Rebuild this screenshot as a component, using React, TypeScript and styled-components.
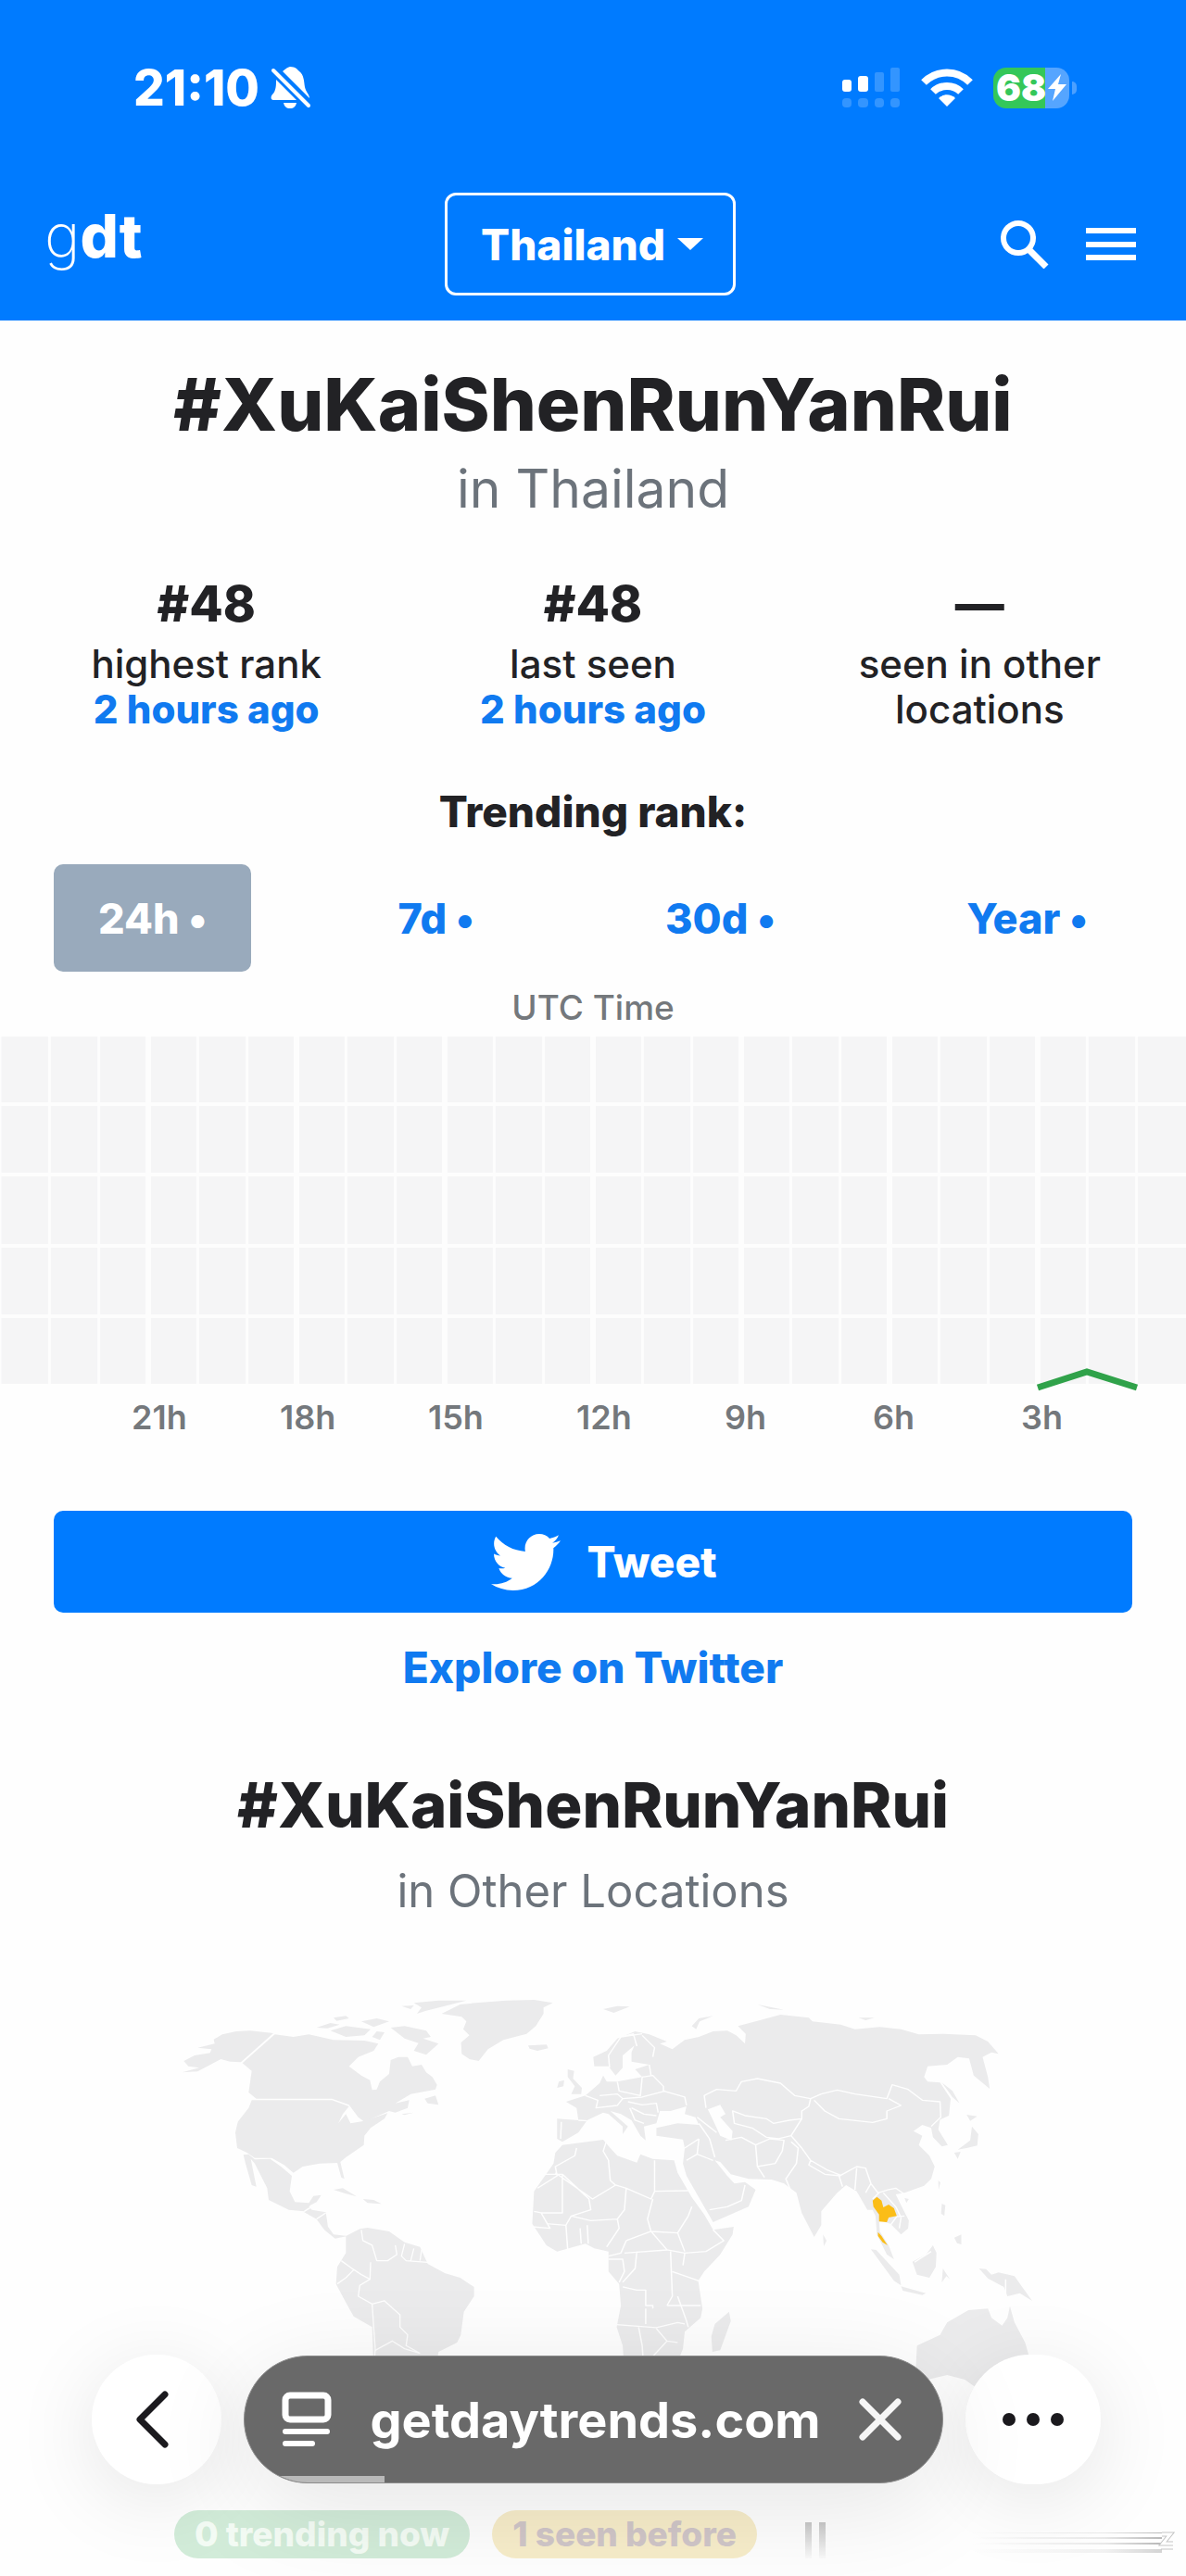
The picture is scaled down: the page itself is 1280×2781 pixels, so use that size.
import styled, { createGlobalStyle } from 'styled-components'
import { FaTwitter } from 'react-icons/fa'

const tabs = ['24h', '7d', '30d', 'Year']
const hours = ['21h', '18h', '15h', '12h', '9h', '6h', '3h']
const stats = [
  { value: '#48', label: 'highest rank', time: '2 hours ago' },
  { value: '#48', label: 'last seen', time: '2 hours ago' },
  { value: '—', label: 'seen in other locations' },
]

const BellOff = () => (
  <svg width="44" height="46" viewBox="0 0 44 46" fill="#fff">
    <path d="M13 5 C16 3 17 1 21 0 C27 0 29 3 31 5 C36 9 36 15 37 22 C38 27 42 30 42 34 Z" />
    <path d="M6 14 L28 36 H3 C0 36 0 32 2 30 C6 26 6 20 6 14 Z" />
    <path d="M14 39 H28 C27 43 25 45 21 45 C17 45 15 43 14 39 Z" />
    <path d="M2 3 L42 43" stroke="#007bff" strokeWidth="8" />
    <path d="M3 4 L41 42" stroke="#fff" strokeWidth="4" strokeLinecap="round" />
  </svg>
)

const Signal = () => (
  <svg width="64" height="44" viewBox="0 0 64 44" fill="#fff">
    <rect x="1" y="13" width="10" height="13" rx="3" />
    <rect x="18" y="9" width="11" height="17" rx="3" />
    <g fillOpacity="0.2">
      <rect x="36" y="5" width="10" height="21" rx="2" />
      <rect x="53" y="0" width="10" height="26" rx="2" />
      <rect x="1" y="33" width="10" height="10" rx="4" />
      <rect x="18" y="33" width="11" height="10" rx="4" />
      <rect x="36" y="33" width="10" height="10" rx="4" />
      <rect x="53" y="33" width="10" height="10" rx="4" />
    </g>
  </svg>
)

const Wifi = () => (
  <svg width="56" height="42" viewBox="0 0 56 42" fill="none" stroke="#fff" strokeWidth="8">
    <path d="M3 15 C17 1 39 1 53 15" />
    <path d="M13 25 C21 17 35 17 43 25" />
    <path d="M28 41 L19 32 C24 27 32 27 37 32 Z" fill="#fff" stroke="none" />
  </svg>
)

const Bolt = () => (
  <svg width="20" height="29" viewBox="0 0 20 29" fill="#fff">
    <path d="M14 0 L0 16 H8 L5 29 L20 11 H11 Z" />
  </svg>
)

const Search = () => (
  <svg width="52" height="52" viewBox="0 0 52 52" fill="none" stroke="#fff">
    <circle cx="19" cy="19" r="16" strokeWidth="6" />
    <path d="M31 32 L49 50" strokeWidth="7" />
  </svg>
)

const Burger = () => (
  <svg width="54" height="36" viewBox="0 0 54 36" fill="#fff">
    <path d="M0 0h54v6H0zM0 15h54v6H0zM0 29h54v6H0z" />
  </svg>
)

const Reader = () => (
  <svg width="54" height="60" viewBox="0 0 54 60" fill="none" stroke="#fff" strokeLinecap="round">
    <rect x="4" y="4" width="46" height="26" rx="5" strokeWidth="7" />
    <path d="M4 43 H49 M4 56 H33" strokeWidth="6" />
  </svg>
)

const Chart = () => (
  <ChartSvg viewBox="0 0 1280 440" role="img" aria-label="Trending rank, last 24 hours">
    <rect width="1280" height="375" fill="#f5f5f6" />
    {Array.from({ length: 24 }, (_, i) => (
      <path
        key={i}
        d={`M${(i * 160) / 3} 0 V375`}
        stroke="#fdfdfd"
        strokeWidth={i > 0 && i % 3 === 0 ? 6 : 3}
      />
    ))}
    <path d="M0 73H1280M0 149H1280M0 226H1280M0 302H1280" stroke="#fdfdfd" strokeWidth="4" />
    <path d="M1120 379 L1173 362 L1227 379" stroke="#30a24a" strokeWidth="7" fill="none" />
    {hours.map((hour, i) => (
      <text key={hour} x={142 + i * 160} y="424">
        {hour}
      </text>
    ))}
  </ChartSvg>
)

const WorldMap = () => (
  <MapSvg viewBox="0 0 1280 560" role="img" aria-label="World map with Thailand highlighted">
    {/* Americas and Greenland */}
    <g transform="translate(160 0) scale(0.3333)">
      <path d="M405 228L330 220L285 222L240 232L212 248L215 262L160 275L205 280L200 292L150 300L115 318L130 335L165 340L110 355L160 352L235 312L265 320L300 322Z" />
      <path d="M410 232L470 240L520 232L600 250L700 252L745 262L730 285L680 305L650 335L690 365L718 380L725 412L740 410L750 385L780 360L785 315L810 305L840 305L855 335L885 330L900 355L920 370L935 395L930 410L850 425L800 455L845 445L840 470L800 485L780 480L700 515L680 500L650 460L595 440L350 440L325 420L335 350L305 325Z" />
      <path d="M335 445L595 445L650 465L630 490L615 520L640 490L655 520L700 512L775 487L765 505L720 535L700 560L698 590L640 630L622 645L635 700L625 695L612 648L555 650L500 660L470 680L440 655L400 632L345 632L320 615L288 600L282 550L290 515L325 470Z" />
      <path d="M308 622L325 620L345 637L395 635L430 660L465 690L458 740L475 775L520 778L535 755L560 752L545 775L525 785L505 805L455 800L390 768L385 730L345 650L332 635L350 725L335 720L315 650Z" />
      <path d="M505 808L520 790L530 800L575 808L582 855L600 880L645 885L605 893L570 865L545 830Z" />
      <path d="M600 735L630 730L675 757L640 748ZM695 765L730 768L755 781L710 778ZM895 440L930 430L940 460L905 455ZM820 490L860 485L830 493Z" />
      <path d="M545 210L590 195L620 200L580 212ZM590 220L640 205L720 215L700 235L640 240ZM600 178L640 172L650 180L610 188ZM690 190L740 180L780 190L730 208ZM785 210L830 205L900 220L915 240L890 245L940 262L900 298L860 285L875 260L830 245ZM740 222L765 225L750 250L725 240ZM820 140L860 138L850 150ZM860 130L940 122L1030 122L960 140L900 155L870 165L885 145Z" />
      <path d="M950 165L1010 135L1080 128L1160 122L1250 120L1310 130L1280 145L1280 165L1255 205L1225 230L1150 250L1100 280L1070 318L1040 312L1015 295L1013 258L1040 235L1020 215L1030 190L1015 175Z" />
      <path d="M1230 268L1290 265L1295 277L1260 285L1235 278Z" />
      <path d="M640 885L685 862L710 858L780 870L830 905L880 920L905 975L960 1005L1010 1020L1055 1050L1055 1080L1022 1130L1012 1205L1000 1230L940 1260L930 1320L730 1320L725 1180L665 1145L640 1100L608 1040L612 985L640 940Z" />
      <path
        className="border"
        d="M690 865L695 900L725 915L740 965L775 965L805 945L800 915M830 910L820 950L835 965L905 970M860 925L850 965M885 930L880 965M720 970L718 1025L690 1010L660 990L625 965M665 995L640 1020L612 1040M718 1025L685 1045L680 1080L725 1105L730 1180L735 1250L730 1320M725 1105L765 1095L815 1140L815 1180L840 1205L835 1240L880 1265M735 1255L790 1225L830 1250L880 1265M505 805L530 790M545 830L575 810"
      />
    </g>
    {/* Europe, Africa, Asia and Oceania */}
    <g transform="translate(540 0) scale(0.3827 0.3333)">
      <path d="M262 305L300 285L330 245L380 222L420 232L470 255L450 262L485 280L520 250L560 240L600 222L640 220L665 235L690 262L692 230L670 205L720 190L790 168L870 178L880 190L960 200L1000 215L1070 208L1130 215L1180 232L1250 230L1340 235L1375 255L1405 295L1385 290L1360 305L1375 370L1380 408L1335 365L1322 310L1290 305L1260 330L1205 335L1195 370L1205 385L1240 388L1270 440L1265 495L1240 508L1235 540L1262 590L1245 595L1220 565L1215 535L1190 525L1165 545L1190 560L1180 590L1210 625L1225 660L1215 700L1195 722L1140 745L1115 750L1130 785L1152 835L1150 860L1130 880L1100 845L1085 840L1068 830L1070 870L1095 915L1110 960L1090 945L1062 880L1058 820L1050 800L1035 800L1005 740L975 720L950 745L905 805L905 850L885 888L850 810L835 745L800 715L765 702L700 700L650 685L620 645L605 640L640 690L660 715L690 710L720 735L700 790L600 840L580 800L525 690L515 650L520 600L515 572L440 560L440 535L500 520L560 525L550 500L520 490L525 465L480 480L450 480L440 520L405 530L410 575L395 560L370 510L340 490L310 480L340 510L360 530L345 555L345 530L305 490L290 485L245 510L220 550L175 580L160 570L160 505L220 510L215 470L185 450L240 430L280 390L290 365L300 385L330 385L400 370L380 345L420 330L370 320L370 290L378 268L345 300L345 340L325 365L305 335L265 335Z" />
      <path d="M190 345L208 350L205 375L230 405L228 425L200 425L210 400L190 370ZM165 385L180 380L178 400L160 405ZM290 150L330 140L365 142L320 162ZM540 205L560 180L600 172L562 190L552 215ZM725 135L800 152L760 150ZM1010 178L1055 178L1030 186Z" />
      <path d="M175 590L290 573L310 600L330 625L385 647L395 620L430 635L490 640L500 680L540 760L575 815L600 865L658 855L655 880L620 945L575 1000L558 1030L570 1120L565 1150L520 1195L515 1250L490 1320L350 1320L345 1240L328 1180L340 1110L335 1040L305 1000L305 935L265 925L240 910L160 935L130 915L90 845L95 740L150 650L155 615Z" />
      <path d="M645 1130L650 1160L620 1255L598 1260L595 1210L605 1170ZM910 880L920 900L912 918Z" />
      <path d="M1245 388L1275 415L1295 455L1275 435ZM1315 492L1345 497L1325 512ZM1330 530L1348 555L1345 592L1315 600L1290 605L1325 575ZM1280 615L1298 612L1290 635ZM1235 705L1241 712L1236 735ZM1140 762L1152 765L1145 778ZM1245 780L1255 785L1252 820L1243 812ZM1280 890L1300 880L1300 912L1288 908Z" />
      <path d="M1045 928L1060 930L1125 1010L1130 1045L1110 1030ZM1130 1048L1200 1070L1190 1076L1135 1062ZM1162 968L1200 945L1220 915L1230 940L1228 985L1210 1020L1175 1010ZM1248 990L1268 1025L1258 1015L1245 1035ZM1350 990L1370 992L1385 1010L1405 1003L1450 1015L1475 1055L1500 1095L1465 1070L1430 1080L1420 1050L1375 1022Z" />
      <path d="M1175 1240L1240 1205L1260 1165L1320 1125L1375 1120L1385 1150L1415 1175L1430 1150L1437 1112L1450 1165L1480 1230L1495 1290L1470 1360L1340 1375L1310 1350L1260 1335L1200 1352L1170 1350Z" />
      <path className="sea" d="M585 475L620 460L635 490L620 500L655 545L652 575L620 560L600 510Z" />
      <path
        className="border"
        d="M308 340L305 300L340 240L375 230L385 270M400 235L435 275L430 305M340 240L400 230M400 370L430 365L460 400L460 415L520 435L525 462M330 385L335 415L395 430L400 370M280 430L330 425L345 440L400 435L465 415M240 430L275 445L270 470L330 462L345 440M360 450L400 460L440 455L445 485M370 470L405 490L440 495M365 470L380 510L405 520M220 510L245 512M172 515L170 570M420 330L425 365"
      />
      <path
        className="border"
        d="M580 470L575 430L610 410L665 415L680 385L725 375L790 390L830 430L875 440L870 465L850 480L850 505L815 510L770 520L750 505L690 495L655 480L660 520L710 535L750 565L785 570L820 560M635 575L680 565L720 590L760 570L800 575L795 610L775 650L725 660M720 590L725 660L745 695M850 505L820 560L850 600L875 640L920 670L960 688L1005 660L1030 665L1045 715L1065 745L1095 735L1115 730L1140 750M875 640L870 655L915 685L960 690M875 440L905 425L950 412L1000 425L1090 440L1105 395L1150 410L1190 445L1240 450L1242 500L1215 530M885 445L915 480L955 505L1050 517L1090 505L1090 480L1130 462L1095 440M820 740L805 700L835 650L840 600L820 580M955 690L965 725M1005 665L1000 735M1045 715L1030 745M1068 745L1050 765M1080 745L1115 790L1130 825L1125 860M1100 850L1118 822L1140 820M560 520L590 570L605 630M560 570L520 600M560 570L555 620L525 640M555 620L600 640M590 800L640 790L680 770L690 720M555 500L610 550"
      />
      <path
        className="border"
        d="M215 600L210 625L155 660L160 690L105 730M155 680L260 765L325 720L355 730L425 765L435 740L530 738M300 575L290 610L305 640L310 705L325 720M435 640V740M125 685H175V810H115L95 805M175 685L250 765L255 800L200 820L185 850M115 810L140 860L90 855M185 850L130 845M185 850L190 930M225 860L228 910M245 850L248 910M200 820L255 835L330 830L350 800L355 730M330 830L335 860L300 920M430 765L415 830L425 870L470 930M355 900L425 870L500 875L530 820L540 790M355 900L340 940L305 950M350 940L470 930L520 940L580 935L630 900L600 865M500 875L520 935M385 935L380 990L345 1035M305 960H345L350 1000L335 1035M480 935L485 1080L470 1110M485 1000L560 1030M520 940L515 980M345 1050L385 1060H410V1110H430V1120M470 1110L520 1110H565M410 1120V1170M328 1172L440 1182L500 1165L520 1170M440 1185L470 1225L500 1230M390 1180L400 1240L405 1320M500 1080L525 1160L530 1180M470 1225L430 1275M1168 970L1215 935M1425 1025V1080"
      />
      <path
        className="active"
        d="M1062 758L1050 770L1052 790L1068 815L1068 838L1090 840L1095 825L1118 820L1110 795L1095 783L1080 792L1075 770ZM1065 872L1075 885L1092 915L1078 905L1065 885Z"
      />
    </g>
  </MapSvg>
)

const App = () => {
  return (
    <>
      <GlobalStyle />
      <Header>
        <StatusBar>
          <Clock>
            21:10
            <BellOff />
          </Clock>
          <Indicators>
            <Signal />
            <Wifi />
            <Battery>
              68
              <Bolt />
            </Battery>
          </Indicators>
        </StatusBar>
        <Nav>
          <Logo href="#" aria-label="gdt home">
            g<b>dt</b>
          </Logo>
          <Location>
            <select aria-label="Location">
              <option>Thailand</option>
            </select>
            <svg width="28" height="13" viewBox="0 0 28 13" fill="#fff">
              <path d="M0 0h28L14 13z" />
            </svg>
          </Location>
          <NavActions>
            <IconButton aria-label="Search">
              <Search />
            </IconButton>
            <IconButton aria-label="Menu">
              <Burger />
            </IconButton>
          </NavActions>
        </Nav>
      </Header>

      <Main>
        <Title>#XuKaiShenRunYanRui</Title>
        <Subtitle>in Thailand</Subtitle>

        <Stats>
          {stats.map(({ value, label, time }) => (
            <Stat key={label}>
              <strong>{value}</strong>
              <span>{label}</span>
              {time && <a href="#">{time}</a>}
            </Stat>
          ))}
        </Stats>

        <RankTitle>Trending rank:</RankTitle>
        <Tabs>
          {tabs.map((tab, i) => (
            <Tab key={tab} $active={i === 0}>
              {tab} •
            </Tab>
          ))}
        </Tabs>
        <Timezone>UTC Time</Timezone>
        <Chart />

        <Share>
          <TweetButton>
            <FaTwitter size={75} />
            Tweet
          </TweetButton>
          <ExploreLink href="#">Explore on Twitter</ExploreLink>
        </Share>

        <OtherTitle>#XuKaiShenRunYanRui</OtherTitle>
        <OtherSubtitle>in Other Locations</OtherSubtitle>
        <WorldMap />

        <Legend>
          <Badge $bg="#d2ecd9" $color="#f4fcf5">
            0 trending now
          </Badge>
          <Badge $bg="#f7edca" $color="#d0c6c8">
            1 seen before
          </Badge>
          <Streaks />
        </Legend>
      </Main>

      <BrowserBar>
        <BackButton aria-label="Back">
          <svg width="38" height="64" viewBox="0 0 38 64" fill="none" stroke="#1b1a1e">
            <path d="M33 5L6 32L33 59" strokeWidth="7" strokeLinecap="round" strokeLinejoin="round" />
          </svg>
        </BackButton>
        <AddressBar>
          <IconButton aria-label="Page options">
            <Reader />
          </IconButton>
          <Address>getdaytrends.com</Address>
          <IconButton aria-label="Stop loading">
            <svg width="46" height="46" viewBox="0 0 46 46" stroke="#f6f6f6">
              <path d="M4 4L42 42M42 4L4 42" strokeWidth="7" strokeLinecap="round" />
            </svg>
          </IconButton>
          <Progress />
        </AddressBar>
        <MoreButton aria-label="More">
          <svg width="66" height="14" viewBox="0 0 66 14" fill="#1b1a1e">
            <circle cx="7" cy="7" r="7" />
            <circle cx="33" cy="7" r="7" />
            <circle cx="59" cy="7" r="7" />
          </svg>
        </MoreButton>
      </BrowserBar>
    </>
  )
}

const Streaks = () => (
  <StreaksSvg viewBox="0 0 400 52">
    <defs>
      <linearGradient id="down" x1="0" y1="0" x2="0" y2="1">
        <stop offset="0" stopColor="#c8c8c8" />
        <stop offset="1" stopColor="#fafafa" />
      </linearGradient>
      <linearGradient id="across">
        <stop offset="0" stopColor="#b8b8b8" stopOpacity="0" />
        <stop offset="0.7" stopColor="#b8b8b8" stopOpacity="0.3" />
        <stop offset="1" stopColor="#b8b8b8" />
      </linearGradient>
    </defs>
    <rect y="13" width="7" height="39" fill="url(#down)" />
    <rect x="15" y="13" width="7" height="39" fill="url(#down)" />
    <g fill="url(#across)">
      <rect x="180" y="24" width="205" height="1" />
      <rect x="180" y="29" width="205" height="2" />
      <rect x="180" y="35" width="205" height="2" />
      <rect x="180" y="42" width="205" height="4" fillOpacity="0.6" />
    </g>
    <path d="M385 26H394L386 36H397M384 40H397" stroke="#c4c4c4" strokeWidth="5" fill="none" />
    <path d="M385 26H394L386 36H397M384 40H397" stroke="#fff" strokeWidth="3" fill="none" />
  </StreaksSvg>
)

const GlobalStyle = createGlobalStyle`
  * {
    box-sizing: border-box;
    margin: 0;
  }
  body {
    background: #fefefe;
    color: #222225;
    font-family: Inter, 'Liberation Sans', sans-serif;
  }
  button, select {
    border: 0;
    padding: 0;
    background: none;
    color: inherit;
    font: inherit;
  }
  a {
    color: #107af0;
    text-decoration: none;
  }
  svg {
    display: block;
    flex-shrink: 0;
  }
`
const Header = styled.header`
  background: #007bff;
  color: #fff;
`
const StatusBar = styled.div`
  display: flex;
  align-items: center;
  justify-content: space-between;
  height: 189px;
  padding: 0 118px 0 144px;
`
const Clock = styled.div`
  display: flex;
  align-items: center;
  gap: 12px;
  font-size: 53px;
  font-weight: 800;
`
const Indicators = styled.div`
  display: flex;
  align-items: center;
  gap: 22px;
`
const Battery = styled.div`
  position: relative;
  display: flex;
  align-items: center;
  justify-content: center;
  gap: 2px;
  width: 82px;
  height: 44px;
  margin-right: 8px;
  border-radius: 14px;
  background: linear-gradient(90deg, #34c759 68%, #55a5ff 68%);
  font-size: 40px;
  font-weight: 900;

  &::after {
    content: '';
    position: absolute;
    right: -8px;
    width: 5px;
    height: 14px;
    border-radius: 0 5px 5px 0;
    background: #4ca0ff;
  }
`
const Nav = styled.nav`
  display: grid;
  grid-template-columns: 1fr auto 1fr;
  align-items: center;
  padding: 19px 54px 27px 48px;
`
const Logo = styled.a`
  align-self: start;
  color: #fff;
  font-size: 65px;
  font-weight: 200;
  line-height: 94px;

  b {
    font-weight: 800;
  }
`
const Location = styled.label`
  display: flex;
  align-items: center;
  gap: 12px;
  height: 111px;
  padding: 0 32px 0 36px;
  border: 3px solid #fff;
  border-radius: 12px;

  select {
    appearance: none;
    font-size: 46px;
    font-weight: 800;
  }
`
const NavActions = styled.div`
  display: flex;
  align-items: center;
  justify-content: flex-end;
  gap: 40px;
`
const IconButton = styled.button`
  display: flex;
  align-items: center;
`
const Main = styled.main`
  padding: 42px 0 18px;
  text-align: center;
`
const Title = styled.h1`
  font-size: 79px;
  font-weight: 800;
  line-height: 96px;
`
const Subtitle = styled.p`
  margin-top: 8px;
  color: #6c737b;
  font-size: 57px;
  font-weight: 400;
  line-height: 72px;
`
const Stats = styled.div`
  display: grid;
  grid-template-columns: repeat(3, 1fr);
  margin-top: 60px;
  padding: 0 14px;
`
const Stat = styled.div`
  display: flex;
  flex-direction: column;
  align-items: center;
  padding: 0 60px;
  font-size: 42px;
  font-weight: 500;
  line-height: 49px;

  strong {
    margin-bottom: 12px;
    font-size: 53px;
    font-weight: 800;
    line-height: 56px;
  }
  a {
    font-weight: 800;
  }
`
const RankTitle = styled.h2`
  margin-top: 58px;
  font-size: 46px;
  font-weight: 800;
  line-height: 56px;
`
const Tabs = styled.div`
  display: flex;
  justify-content: space-between;
  margin-top: 29px;
  padding: 0 58px;
`
const Tab = styled.button<{ $active: boolean }>`
  height: 116px;
  padding: 0 48px;
  border-radius: 10px;
  background: ${({ $active }) => ($active ? '#99aabc' : 'none')};
  color: ${({ $active }) => ($active ? '#fff' : '#107af0')};
  font-size: 45px;
  font-weight: 800;
`
const Timezone = styled.p`
  margin: 17px 0 9px;
  color: #74787c;
  font-size: 37px;
  font-weight: 500;
  line-height: 44px;
`
const ChartSvg = styled.svg`
  width: 100%;
  fill: #74787c;
  font-size: 36px;
  font-weight: 600;
`
const Share = styled.div`
  display: flex;
  flex-direction: column;
  gap: 31px;
  padding: 72px 58px 0;
`
const TweetButton = styled.button`
  display: flex;
  align-items: center;
  justify-content: center;
  gap: 28px;
  height: 110px;
  padding-left: 24px;
  border-radius: 10px;
  background: #007bff;
  color: #fff;
  font-size: 46px;
  font-weight: 800;
`
const ExploreLink = styled.a`
  font-size: 46px;
  font-weight: 800;
  line-height: 56px;
`
const OtherTitle = styled.h2`
  margin-top: 81px;
  font-size: 67px;
  font-weight: 800;
  line-height: 80px;
`
const OtherSubtitle = styled.p`
  margin: 21px 0 45px;
  color: #6c737b;
  font-size: 49px;
  font-weight: 400;
  line-height: 64px;
`
const MapSvg = styled.svg`
  width: 100%;
  fill: #ebebec;

  .border {
    fill: none;
    stroke: #fefefe;
    stroke-width: 4;
    stroke-linejoin: round;
  }
  .sea {
    fill: #fefefe;
  }
  .active {
    fill: #fbbd17;
  }
`
const Legend = styled.div`
  display: flex;
  align-items: center;
  gap: 24px;
  margin-top: 31px;
  padding-left: 188px;
`
const Badge = styled.span<{ $bg: string; $color: string }>`
  padding: 0 22px;
  border-radius: 26px;
  background: ${({ $bg }) => $bg};
  color: ${({ $color }) => $color};
  font-size: 37px;
  font-weight: 800;
  line-height: 52px;
  white-space: nowrap;
`
const StreaksSvg = styled.svg`
  width: 400px;
  margin-left: auto;
  margin-right: 11px;
`
const BrowserBar = styled.footer`
  position: fixed;
  right: 0;
  bottom: 99px;
  left: 0;
  display: flex;
  align-items: center;
  gap: 24px;
  padding: 0 92px 0 99px;
`
const RoundButton = styled.button`
  display: flex;
  align-items: center;
  justify-content: center;
  height: 140px;
  border-radius: 73px;
  background: #fff;
  box-shadow: 0 16px 90px rgba(0, 0, 0, 0.1);
`
const BackButton = styled(RoundButton)`
  width: 140px;
  padding-right: 10px;
`
const MoreButton = styled(RoundButton)`
  width: 146px;
`
const AddressBar = styled.div`
  position: relative;
  flex: 1;
  display: flex;
  align-items: center;
  justify-content: space-between;
  height: 138px;
  padding: 0 44px 0 40px;
  overflow: hidden;
  border: 1px solid #8b8b8b;
  border-radius: 69px;
  background: #696969;
  box-shadow: 0 24px 110px rgba(0, 0, 0, 0.1);
`
const Address = styled.button`
  color: #fff;
  font-size: 54px;
  font-weight: 700;
`
const Progress = styled.span`
  position: absolute;
  bottom: 0;
  left: 0;
  width: 20%;
  height: 7px;
  background: #b9b9b9;
`
export default App
